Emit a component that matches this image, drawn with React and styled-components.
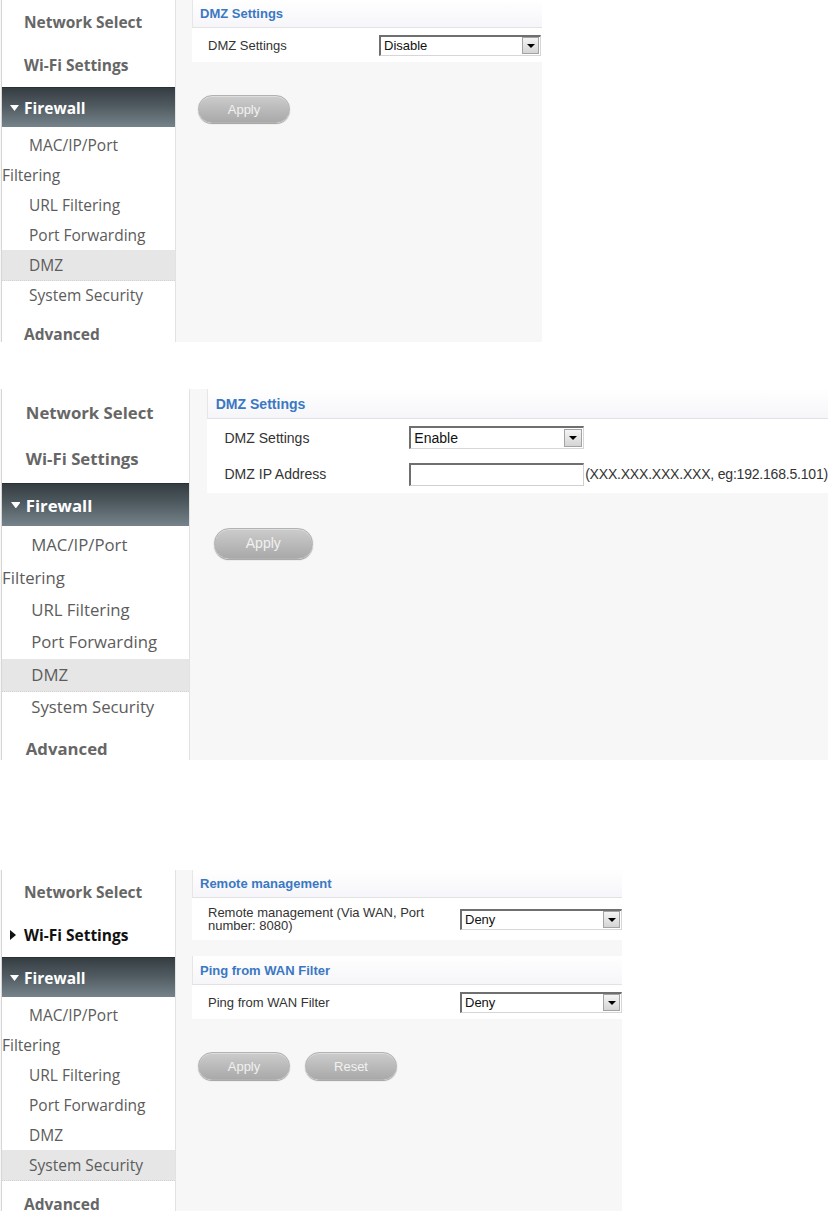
import React from "react";
import styled, { createGlobalStyle } from "styled-components";

const GlobalStyle = createGlobalStyle`
  html, body {
    margin: 0;
    padding: 0;
    background: #ffffff;
  }
`;

const SANS = `"Open Sans", "Noto Sans", sans-serif`;
const ARIAL = `"Liberation Sans", Arial, sans-serif`;

const SUB_ITEMS = [
  "MAC/IP/Port Filtering",
  "URL Filtering",
  "Port Forwarding",
  "DMZ",
  "System Security",
];

const Page = styled.div`
  display: flex;
  flex-direction: column;
`;

const Shot = styled.div`
  margin-top: ${(p) => p.$gap}px;
  height: ${(p) => p.$height}px;
  overflow: hidden;
`;

const Frame = styled.div`
  zoom: ${(p) => p.$zoom || 1};
  display: flex;
  width: ${(p) => p.$width}px;
  height: 360px;
  background: #f7f7f7;
`;

/* ---------- sidebar ---------- */

const Sidebar = styled.nav`
  width: 173px;
  margin-left: 1px;
  border-left: 1px solid #d6d6d6;
  border-right: 1px solid #e2e2e2;
  background: #ffffff;
  font-family: ${SANS};
  flex-shrink: 0;
`;

const NavHeading = styled.div`
  display: flex;
  align-items: center;
  height: 43px;
  padding-left: 22px;
  font-size: 15.5px;
  font-weight: 700;
  color: ${(p) => (p.$open ? "#111111" : "#666666")};
`;

const Marker = styled.span`
  display: inline-flex;
  width: 14px;
  margin-left: -14px;
`;

const NavBar = styled.div`
  display: flex;
  align-items: center;
  height: 40px;
  margin-top: 1px;
  padding-left: 22px;
  background: linear-gradient(#343d42 0%, #4f5a60 45%, #76838a 100%);
  border-top: 1px solid #2a3135;
  box-sizing: border-box;
  color: #ffffff;
  font-size: 15.5px;
  font-weight: 700;
`;

const SubList = styled.div`
  padding: 3px 0 2px;
`;

const SubItem = styled.div`
  line-height: 30px;
  text-indent: 27px;
  font-size: 15.5px;
  color: #5c5c5c;
  background: ${(p) => (p.$active ? "#e6e6e6" : "transparent")};
  border-bottom: 1px dotted ${(p) => (p.$active ? "#d4d4d4" : "transparent")};
  margin-bottom: -1px;
`;

const DownTriangle = () => (
  <svg width="9" height="6" viewBox="0 0 9 6">
    <path d="M0 0 H9 L4.5 6 Z" fill="#ffffff" />
  </svg>
);

const RightTriangle = () => (
  <svg width="6" height="10" viewBox="0 0 6 10">
    <path d="M0 0 L6 5 L0 10 Z" fill="#111111" />
  </svg>
);

const Nav = ({ active, wifiOpen }) => (
  <Sidebar>
    <NavHeading>Network Select</NavHeading>
    <NavHeading $open={wifiOpen}>
      {wifiOpen && (
        <Marker>
          <RightTriangle />
        </Marker>
      )}
      Wi-Fi Settings
    </NavHeading>
    <NavBar>
      <Marker>
        <DownTriangle />
      </Marker>
      Firewall
    </NavBar>
    <SubList>
      {SUB_ITEMS.map((item) => (
        <SubItem key={item} $active={item === active}>
          {item}
        </SubItem>
      ))}
    </SubList>
    <NavHeading>Advanced</NavHeading>
  </Sidebar>
);

/* ---------- content ---------- */

const Content = styled.main`
  flex: 1;
  padding-left: 16px;
  font-family: ${ARIAL};
  font-size: 13px;
  color: #333333;
`;

const Section = styled.section`
  background: #ffffff;
  margin-bottom: 16px;
`;

const SectionHead = styled.div`
  display: flex;
  align-items: center;
  height: ${(p) => p.$height || 28}px;
  box-sizing: border-box;
  padding-left: 7px;
  background: linear-gradient(#ffffff, #f6f5f9);
  border-left: 1px solid #e6e6e6;
  border-bottom: 1px solid #e2e2e2;
  color: #3a78c3;
  font-weight: 700;
`;

const Row = styled.div`
  display: flex;
  align-items: center;
  min-height: 34px;
  box-sizing: border-box;
  padding: 8px 0 8px 16px;
`;

const Label = styled.div`
  width: ${(p) => p.$width}px;
  flex-shrink: 0;
  line-height: 13px;
  padding-right: 20px;
  box-sizing: border-box;
`;

const SelectBox = styled.div`
  display: flex;
  align-items: center;
  justify-content: space-between;
  width: 162px;
  height: 21px;
  margin: -4px 0;
  box-sizing: border-box;
  border-top: 2px solid #6f6f6f;
  border-left: 2px solid #6f6f6f;
  border-right: 1px solid #d6d6d6;
  border-bottom: 1px solid #d6d6d6;
  background: #ffffff;
  padding-left: 3px;
  color: #111111;
`;

const SelectArrow = styled.span`
  display: flex;
  align-items: center;
  justify-content: center;
  width: 17px;
  height: 17px;
  margin-right: 1px;
  box-sizing: border-box;
  border: 1px solid #a3a3a3;
  background: linear-gradient(#f4f4f4, #d4d4d4);

  &::after {
    content: "";
    border-left: 4px solid transparent;
    border-right: 4px solid transparent;
    border-top: 4px solid #000000;
  }
`;

const TextInput = styled.div`
  width: 162px;
  height: 21px;
  margin: -4px 0;
  box-sizing: border-box;
  border-top: 2px solid #6f6f6f;
  border-left: 2px solid #6f6f6f;
  border-right: 1px solid #d0d0d0;
  border-bottom: 1px solid #d0d0d0;
  background: #ffffff;
`;

const Hint = styled.span`
  margin-left: 1px;
  white-space: nowrap;
  color: #333333;
  letter-spacing: -0.2px;
`;

const Actions = styled.div`
  display: flex;
  gap: 15px;
  margin-top: ${(p) => p.$top}px;
  padding-left: 6px;
`;

const PillButton = styled.button`
  width: 92px;
  height: 28px;
  border-radius: 14px;
  border: 1px solid #b3b2b2;
  background: linear-gradient(#cdcccc, #aaa9a9);
  box-shadow: 0 1px 1px rgba(0, 0, 0, 0.35), inset 0 1px 0 rgba(255, 255, 255, 0.35);
  color: #f1f1f1;
  font-family: ${ARIAL};
  font-size: 13px;
  padding: 0;
`;

const Select = ({ value }) => (
  <SelectBox>
    {value}
    <SelectArrow />
  </SelectBox>
);

export default function App() {
  return (
    <Page>
      <GlobalStyle />

      <Shot $gap={0} $height={342}>
        <Frame $width={542}>
          <Nav active="DMZ" />
          <Content>
            <Section>
              <SectionHead>DMZ Settings</SectionHead>
              <Row>
                <Label $width={171}>DMZ Settings</Label>
                <Select value="Disable" />
              </Row>
            </Section>
            <Actions $top={33}>
              <PillButton>Apply</PillButton>
            </Actions>
          </Content>
        </Frame>
      </Shot>

      <Shot $gap={47} $height={371}>
        <Frame $zoom={1.08} $width={767}>
          <Nav active="DMZ" />
          <Content>
            <Section>
              <SectionHead>DMZ Settings</SectionHead>
              <Row>
                <Label $width={171}>DMZ Settings</Label>
                <Select value="Enable" />
              </Row>
              <Row>
                <Label $width={171}>DMZ IP Address</Label>
                <TextInput />
                <Hint>(XXX.XXX.XXX.XXX, eg:192.168.5.101)</Hint>
              </Row>
            </Section>
            <Actions $top={33}>
              <PillButton>Apply</PillButton>
            </Actions>
          </Content>
        </Frame>
      </Shot>

      <Shot $gap={110} $height={400}>
        <Frame $width={622}>
          <Nav active="System Security" wifiOpen />
          <Content>
            <Section>
              <SectionHead>Remote management</SectionHead>
              <Row>
                <Label $width={252}>Remote management (Via WAN, Port number: 8080)</Label>
                <Select value="Deny" />
              </Row>
            </Section>
            <Section>
              <SectionHead $height={29}>Ping from WAN Filter</SectionHead>
              <Row>
                <Label $width={252}>Ping from WAN Filter</Label>
                <Select value="Deny" />
              </Row>
            </Section>
            <Actions $top={33}>
              <PillButton>Apply</PillButton>
              <PillButton>Reset</PillButton>
            </Actions>
          </Content>
        </Frame>
      </Shot>
    </Page>
  );
}
